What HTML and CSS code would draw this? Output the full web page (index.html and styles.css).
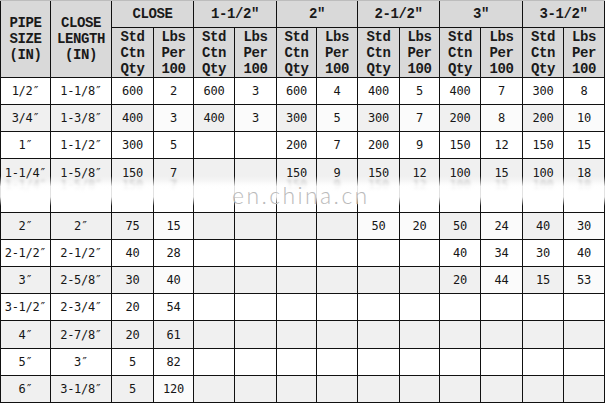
FILE: index.html
```html
<!DOCTYPE html>
<html>
<head>
<meta charset="utf-8">
<link rel="stylesheet" href="styles.css">
</head>
<body>
<div class="sheet">
  <div class="grid">
    <div class="h r2">PIPE<br>SIZE<br>(IN)</div>
    <div class="h r2">CLOSE<br>LENGTH<br>(IN)</div>
    <div class="h c2">CLOSE</div>
    <div class="h c2">1-1/2″</div>
    <div class="h c2">2″</div>
    <div class="h c2">2-1/2″</div>
    <div class="h c2">3″</div>
    <div class="h c2">3-1/2″</div>
    <div class="h">Std<br>Ctn<br>Qty</div><div class="h">Lbs<br>Per<br>100</div>
    <div class="h">Std<br>Ctn<br>Qty</div><div class="h">Lbs<br>Per<br>100</div>
    <div class="h">Std<br>Ctn<br>Qty</div><div class="h">Lbs<br>Per<br>100</div>
    <div class="h">Std<br>Ctn<br>Qty</div><div class="h">Lbs<br>Per<br>100</div>
    <div class="h">Std<br>Ctn<br>Qty</div><div class="h">Lbs<br>Per<br>100</div>
    <div class="h">Std<br>Ctn<br>Qty</div><div class="h">Lbs<br>Per<br>100</div>

    <div class="row">
      <div class="d">1/2″</div><div class="d">1-1/8″</div>
      <div class="d">600</div><div class="d">2</div>
      <div class="d">600</div><div class="d">3</div>
      <div class="d">600</div><div class="d">4</div>
      <div class="d">400</div><div class="d">5</div>
      <div class="d">400</div><div class="d">7</div>
      <div class="d">300</div><div class="d">8</div>
    </div>
    <div class="row alt">
      <div class="d">3/4″</div><div class="d">1-3/8″</div>
      <div class="d">400</div><div class="d w">3</div>
      <div class="d">400</div><div class="d w">3</div>
      <div class="d">300</div><div class="d w">5</div>
      <div class="d">300</div><div class="d w">7</div>
      <div class="d">200</div><div class="d w">8</div>
      <div class="d">200</div><div class="d w">10</div>
    </div>
    <div class="row">
      <div class="d">1″</div><div class="d">1-1/2″</div>
      <div class="d">300</div><div class="d">5</div>
      <div class="d"></div><div class="d"></div>
      <div class="d">200</div><div class="d">7</div>
      <div class="d">200</div><div class="d">9</div>
      <div class="d">150</div><div class="d">12</div>
      <div class="d">150</div><div class="d">15</div>
    </div>
    <div class="row smeared">
      <div class="d">1-1/4″</div><div class="d">1-5/8″</div>
      <div class="d">150</div><div class="d">7</div>
      <div class="d"></div><div class="d"></div>
      <div class="d">150</div><div class="d">9</div>
      <div class="d">150</div><div class="d">12</div>
      <div class="d">100</div><div class="d">15</div>
      <div class="d">100</div><div class="d">18</div>
    </div>
    <div class="row alt">
      <div class="d">2″</div><div class="d">2″</div>
      <div class="d">75</div><div class="d w">15</div>
      <div class="d"></div><div class="d"></div>
      <div class="d"></div><div class="d"></div>
      <div class="d w">50</div><div class="d w">20</div>
      <div class="d">50</div><div class="d w">24</div>
      <div class="d">40</div><div class="d w">30</div>
    </div>
    <div class="row">
      <div class="d">2-1/2″</div><div class="d">2-1/2″</div>
      <div class="d">40</div><div class="d">28</div>
      <div class="d"></div><div class="d"></div>
      <div class="d"></div><div class="d"></div>
      <div class="d"></div><div class="d"></div>
      <div class="d">40</div><div class="d">34</div>
      <div class="d">30</div><div class="d">40</div>
    </div>
    <div class="row alt">
      <div class="d">3″</div><div class="d">2-5/8″</div>
      <div class="d">30</div><div class="d w">40</div>
      <div class="d"></div><div class="d"></div>
      <div class="d"></div><div class="d"></div>
      <div class="d"></div><div class="d"></div>
      <div class="d">20</div><div class="d w">44</div>
      <div class="d">15</div><div class="d w">53</div>
    </div>
    <div class="row">
      <div class="d">3-1/2″</div><div class="d">2-3/4″</div>
      <div class="d">20</div><div class="d">54</div>
      <div class="d"></div><div class="d"></div>
      <div class="d"></div><div class="d"></div>
      <div class="d"></div><div class="d"></div>
      <div class="d"></div><div class="d"></div>
      <div class="d"></div><div class="d"></div>
    </div>
    <div class="row alt">
      <div class="d">4″</div><div class="d">2-7/8″</div>
      <div class="d">20</div><div class="d">61</div>
      <div class="d"></div><div class="d"></div>
      <div class="d"></div><div class="d"></div>
      <div class="d"></div><div class="d"></div>
      <div class="d"></div><div class="d"></div>
      <div class="d"></div><div class="d"></div>
    </div>
    <div class="row">
      <div class="d">5″</div><div class="d">3″</div>
      <div class="d">5</div><div class="d">82</div>
      <div class="d"></div><div class="d"></div>
      <div class="d"></div><div class="d"></div>
      <div class="d"></div><div class="d"></div>
      <div class="d"></div><div class="d"></div>
      <div class="d"></div><div class="d"></div>
    </div>
    <div class="row alt">
      <div class="d">6″</div><div class="d">3-1/8″</div>
      <div class="d">5</div><div class="d w">120</div>
      <div class="d"></div><div class="d"></div>
      <div class="d"></div><div class="d"></div>
      <div class="d"></div><div class="d"></div>
      <div class="d"></div><div class="d"></div>
      <div class="d"></div><div class="d"></div>
    </div>
  </div>
  <div class="band"></div>
  <div class="mark">en.china.cn</div>
</div>
</body>
</html>
```

FILE: styles.css
```css
html, body {
  margin: 0;
  padding: 0;
  background: #ffffff;
}

.sheet {
  position: relative;
  width: 605px;
  height: 403px;
  overflow: hidden;
}

.grid {
  display: grid;
  grid-template-columns: 49px 60px 41px 39px 40px 41px 39px 40px 41px 39px 40px 41px 40px 40px;
  grid-template-rows: 26px 49px 26px 26px 26px 53px 26px 26px 26px 26px 27px 26px 26px;
  gap: 1px;
  padding: 0 1px 1px 1px;
  border-top: 1px solid #bdbdbd;
  background: #111111;
  width: 605px;
  box-sizing: border-box;
}

.row {
  display: contents;
}

.h {
  background: #d9d9d9;
  color: #1a1a1a;
  font-family: "Liberation Mono", "DejaVu Sans Mono", monospace;
  font-weight: bold;
  font-size: 14px;
  letter-spacing: -0.4px;
  line-height: 16px;
  display: flex;
  align-items: center;
  justify-content: center;
  text-align: center;
}

.r2 {
  grid-row: span 2;
}

.c2 {
  grid-column: span 2;
}

.d {
  background: #ffffff;
  color: #161616;
  font-family: "DejaVu Sans Mono", "Liberation Mono", monospace;
  font-size: 12px;
  letter-spacing: -0.3px;
  display: flex;
  align-items: center;
  justify-content: center;
  white-space: nowrap;
}

.alt .d {
  background: #f0f0f0;
}

.alt .d.w {
  background: #fbfbfb;
}

.smeared .d {
  background: linear-gradient(#f0f0f0 0, #f0f0f0 22px, #ffffff 30px);
  align-items: flex-start;
  padding-top: 7px;
  line-height: 14px;
  text-shadow: 0 12px 3px rgba(60, 60, 60, 0.55);
}

.band {
  position: absolute;
  left: 0;
  top: 176px;
  width: 605px;
  height: 30px;
  background: linear-gradient(rgba(255,255,255,0), rgba(255,255,255,0.88) 35%, rgba(255,255,255,0.88) 70%, rgba(255,255,255,0));
}

.mark {
  position: absolute;
  left: 232px;
  top: 181px;
  font-family: Lato, "Open Sans", sans-serif;
  font-weight: 300;
  font-size: 23px;
  letter-spacing: 2.4px;
  color: #bababa;
}
```
